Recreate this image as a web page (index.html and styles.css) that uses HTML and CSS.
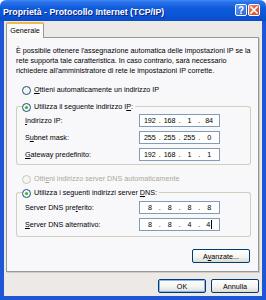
FILE: index.html
```html
<!DOCTYPE html>
<html lang="it">
<head>
<meta charset="utf-8">
<title>Proprietà - Protocollo Internet (TCP/IP)</title>
<link rel="stylesheet" href="styles.css">
</head>
<body>
<div class="window">
  <div class="titlebar">
    <span class="title">Proprietà - Protocollo Internet (TCP/IP)</span>
    <div class="tbtns">
      <span class="tbtn help">?</span>
      <span class="tbtn close"><svg width="8" height="8" viewBox="0 0 8 8"><path d="M1 1L7 7M7 1L1 7" stroke="#fff" stroke-width="1.6" stroke-linecap="square"/></svg></span>
    </div>
  </div>
  <div class="client">
    <div class="tabs"><div class="tab">Generale</div></div>
    <div class="panel">
      <p class="intro">È possibile ottenere l'assegnazione automatica delle impostazioni IP se la<br>rete supporta tale caratteristica. In caso contrario, sarà necessario<br>richiedere all'amministratore di rete le impostazioni IP corrette.</p>
      <div class="radio top"><span class="rb"></span><span class="rt"><u>O</u>ttieni automaticamente un indirizzo IP</span></div>
      <div class="group">
        <div class="gtitle">
          <span class="gline l"></span>
          <div class="radio"><span class="rb on"><span class="dot"></span></span><span class="rt">Utilizza il seguente indirizzo I<u>P</u>:</span></div>
          <span class="gline r"></span>
        </div>
        <div class="gbody">
          <div class="row"><span class="lbl"><u>I</u>ndirizzo IP:</span><span class="ip"><i>192</i><b>.</b><i>168</i><b>.</b><i>1</i><b>.</b><i>84</i></span></div>
          <div class="row"><span class="lbl">S<u>u</u>bnet mask:</span><span class="ip"><i>255</i><b>.</b><i>255</i><b>.</b><i>255</i><b>.</b><i>0</i></span></div>
          <div class="row"><span class="lbl"><u>G</u>ateway predefinito:</span><span class="ip"><i>192</i><b>.</b><i>168</i><b>.</b><i>1</i><b>.</b><i>1</i></span></div>
        </div>
      </div>
      <div class="radio mid disabled"><span class="rb"></span><span class="rt">Otti<u>e</u>ni indirizzo server DNS automaticamente</span></div>
      <div class="group dns">
        <div class="gtitle">
          <span class="gline l"></span>
          <div class="radio"><span class="rb on"><span class="dot"></span></span><span class="rt">Utilizza i seguenti indirizzi server <u>D</u>NS:</span></div>
          <span class="gline r"></span>
        </div>
        <div class="gbody">
          <div class="row"><span class="lbl">Server DNS pre<u>f</u>erito:</span><span class="ip"><i>8</i><b>.</b><i>8</i><b>.</b><i>8</i><b>.</b><i>8</i></span></div>
          <div class="row"><span class="lbl"><u>S</u>erver DNS alternativo:</span><span class="ip"><i>8</i><b>.</b><i>8</i><b>.</b><i>4</i><b>.</b><i>4<span class="caret"></span></i></span></div>
        </div>
      </div>
      <div class="adv"><button class="btn adv-btn">A<u>v</u>anzate...</button></div>
    </div>
    <div class="footer">
      <button class="btn default">OK</button>
      <button class="btn">Annulla</button>
    </div>
  </div>
</div>
</body>
</html>
```

FILE: styles.css
```css
* { box-sizing: border-box; }
html, body { margin: 0; padding: 0; }
body {
  width: 266px;
  height: 300px;
  font-family: "Liberation Sans", Arial, sans-serif;
  font-size: 7.2px;
  font-weight: normal;
  color: #000;
  background: #fff;
}
.window {
  width: 266px;
  height: 300px;
  display: flex;
  flex-direction: column;
  background: #ECE9E6;
  border-radius: 6px 6px 0 0;
  overflow: hidden;
}
.titlebar {
  height: 21px;
  flex: none;
  display: flex;
  align-items: center;
  justify-content: space-between;
  padding: 0 6px 0 3px;
  background: linear-gradient(to bottom, #3E8BF6 0%, #2A6FEA 12%, #0D5BDB 40%, #0A55D8 70%, #0A4CC8 100%);
}
.title {
  color: #fff;
  font-weight: bold;
  font-size: 8.8px;
  text-shadow: 1px 1px 0 #0A1E7A;
  white-space: nowrap;
  padding-top: 2px;
}
.tbtns { display: flex; gap: 1px; margin-top: -1px; }
.tbtn {
  width: 12px;
  height: 12px;
  border: 1px solid #fff;
  border-radius: 2px;
  display: flex;
  align-items: center;
  justify-content: center;
  color: #fff;
  font-weight: bold;
  font-size: 10px;
}
.help { background: linear-gradient(135deg, #5F98F5, #2C64DD); }
.close { background: linear-gradient(135deg, #E9886A, #D24A1E); }
.client {
  flex: 1;
  display: flex;
  flex-direction: column;
  border: 4px solid #1E56D6;
  border-top: none;
  padding: 1px 3px 3px 2px;
}
.tabs { display: flex; height: 16px; position: relative; z-index: 1; margin-bottom: -1px; }
.tab {
  width: 38px;
  height: 16px;
  background: #FBFBFA;
  border: 1px solid #919B9C;
  border-bottom: none;
  border-top: 2px solid #F4B94A;
  border-radius: 2px 2px 0 0;
  display: flex;
  align-items: center;
  justify-content: center;
  padding-bottom: 1px;
}
.panel {
  flex: none;
  height: 235px;
  background: #F8F8FA;
  border: 1px solid #919B9C;
  box-shadow: 1px 1px 0 #D0CDC5;
  padding: 8px 7px 0 9px;
}
.intro { margin: 0; line-height: 10px; white-space: nowrap; }
.radio {
  display: flex;
  align-items: center;
  height: 12px;
  line-height: 12px;
  white-space: nowrap;
}
.rt { margin-left: 3px; font-weight: 400; }
.radio.top { margin: 8px 0 0 6px; }
.radio.mid { margin: 8px 0 0 6px; }
.rb {
  width: 9px;
  height: 9px;
  border-radius: 50%;
  border: 1px solid #1C5180;
  background: #F4F4EF;
  display: flex;
  align-items: center;
  justify-content: center;
  flex: none;
}
.dot {
  width: 3px;
  height: 3px;
  border-radius: 50%;
  background: #32B432;
}
.disabled { color: #ACA899; }
.disabled .rb { border-color: #CAC8BB; background: #F6F5F0; }
.group { width: 235px; margin-top: 5px; }
.group.dns { margin-top: 2px; }
.gtitle { display: flex; height: 12px; }
.gline {
  align-self: flex-end;
  height: 7px;
  border-top: 1px solid #D0D0BF;
}
.gline.l { width: 6px; flex: none; border-left: 1px solid #D0D0BF; border-top-left-radius: 3px; }
.gline.r { flex: 1; margin-left: 2px; border-right: 1px solid #D0D0BF; border-top-right-radius: 3px; }
.gbody {
  border: 1px solid #D0D0BF;
  border-top: none;
  border-radius: 0 0 3px 3px;
  padding: 1px 0 3px 8px;
}
.group.dns .gbody { padding-top: 2px; padding-bottom: 5px; }
.row { display: flex; align-items: center; height: 13px; margin-bottom: 4px; }
.row:last-child { margin-bottom: 0; }
.lbl { width: 114px; flex: none; }
.ip {
  width: 81px;
  height: 13px;
  border: 1px solid #7F9DB9;
  background: #fff;
  display: flex;
  align-items: center;
  padding: 0 2px;
}
.ip i { font-style: normal; flex: 1; text-align: center; }
.ip b { font-weight: normal; width: 4px; text-align: center; }
.caret {
  display: inline-block;
  width: 1px;
  height: 9px;
  background: #000;
  vertical-align: middle;
  margin-left: 1px;
}
.adv { display: flex; justify-content: flex-end; margin-top: 12px; padding-right: 1px; }
.btn {
  font-family: inherit;
  font-size: 7.2px;
  color: #000;
  height: 14px;
  width: 48px;
  padding: 0;
  border: 1px solid #003C74;
  border-radius: 2px;
  background: linear-gradient(to bottom, #FFFFFF 0%, #F3F3EF 60%, #DCDAD2 100%);
}
.adv-btn { width: 58px; }
.btn.default { box-shadow: inset 0 0 0 1px #8CB4F2; }
.footer {
  display: flex;
  justify-content: flex-end;
  gap: 5px;
  margin-top: 7px;
}
```
